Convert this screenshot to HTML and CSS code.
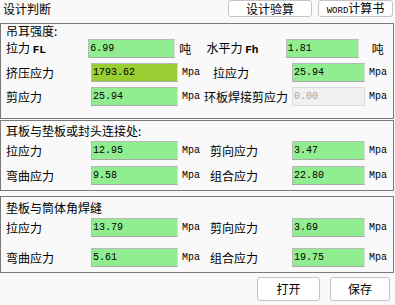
FILE: index.html
```html
<!DOCTYPE html>
<html lang="zh-CN">
  <head>
    <meta charset="UTF-8" />
    <meta name="viewport" content="width=device-width, initial-scale=1.0" />
    <title>设计判断</title>
    <link rel="stylesheet" href="styles.css">
  </head>
  <body>
    <header class="topbar">
      <span class="page-title">设计判断</span>
      <div class="top-actions">
        <button class="btn btn-check">设计验算</button>
        <button class="btn btn-word"><span class="latin">WORD</span>计算书</button>
      </div>
    </header>

    <section class="group group-lug">
      <h2 class="group-title">吊耳强度:</h2>
      <div class="row">
        <label class="lbl">拉力 <span class="latin">FL</span></label>
        <input class="field" value="6.99" readonly />
        <span class="unit">吨</span>
        <label class="lbl2">水平力 <span class="latin">Fh</span></label>
        <input class="field field-sm" value="1.81" readonly />
        <span class="unit unit-ton">吨</span>
      </div>
      <div class="row">
        <label class="lbl">挤压应力</label>
        <input class="field field-warn" value="1793.62" readonly />
        <span class="unit latin">Mpa</span>
        <label class="lbl2 lbl2-in">拉应力</label>
        <input class="field field-sm" value="25.94" readonly />
        <span class="unit latin">Mpa</span>
      </div>
      <div class="row">
        <label class="lbl">剪应力</label>
        <input class="field" value="25.94" readonly />
        <span class="unit latin">Mpa</span>
        <label class="lbl2 lbl2-long">环板焊接剪应力</label>
        <input class="field field-sm" value="0.00" disabled />
        <span class="unit latin">Mpa</span>
      </div>
    </section>

    <section class="group group-plate">
      <h2 class="group-title">耳板与垫板或封头连接处:</h2>
      <div class="row">
        <label class="lbl">拉应力</label>
        <input class="field" value="12.95" readonly />
        <span class="unit latin">Mpa</span>
        <label class="lbl2">剪向应力</label>
        <input class="field field-sm" value="3.47" readonly />
        <span class="unit latin">Mpa</span>
      </div>
      <div class="row">
        <label class="lbl">弯曲应力</label>
        <input class="field" value="9.58" readonly />
        <span class="unit latin">Mpa</span>
        <label class="lbl2">组合应力</label>
        <input class="field field-sm" value="22.80" readonly />
        <span class="unit latin">Mpa</span>
      </div>
    </section>

    <section class="group group-weld">
      <h2 class="group-title">垫板与筒体角焊缝</h2>
      <div class="row">
        <label class="lbl">拉应力</label>
        <input class="field" value="13.79" readonly />
        <span class="unit latin">Mpa</span>
        <label class="lbl2">剪向应力</label>
        <input class="field field-sm" value="3.69" readonly />
        <span class="unit latin">Mpa</span>
      </div>
      <div class="row">
        <label class="lbl">弯曲应力</label>
        <input class="field" value="5.61" readonly />
        <span class="unit latin">Mpa</span>
        <label class="lbl2">组合应力</label>
        <input class="field field-sm" value="19.75" readonly />
        <span class="unit latin">Mpa</span>
      </div>
    </section>

    <footer class="actions">
      <button class="btn btn-open">打开</button>
      <button class="btn btn-save">保存</button>
    </footer>
  </body>
</html>
```

FILE: styles.css
```css
body {
  font-family: "Noto Sans CJK SC", "Noto Sans", sans-serif;
  font-size: 12px;
  line-height: 14px;
  color: #000;
  margin: 0;
  padding: 0;
  background-color: #f9f9f9;
}
.latin {
  font-family: "Liberation Mono", monospace;
  font-size: 10px;
}
.lbl .latin,
.lbl2 .latin {
  font-size: 11px;
  font-weight: bold;
}
.topbar {
  display: flex;
  justify-content: space-between;
  height: 23px;
}
.page-title {
  padding: 2px 0 0 3px;
  line-height: 14px;
}
.top-actions {
  display: flex;
  gap: 6px;
  padding-right: 2px;
}
.btn {
  font-family: inherit;
  font-size: 12px;
  line-height: 14px;
  background-color: #fff;
  border: 1px solid #c4c4c4;
  border-radius: 3px;
  padding: 0;
  color: #000;
}
.btn-check {
  width: 84px;
  height: 17px;
}
.btn-word {
  width: 75px;
  height: 17px;
}
.btn-word .latin {
  font-size: 9px;
}

.group {
  border: 1px solid #7a7a7a;
  margin-right: 1px;
}
.group-title {
  font-size: 12px;
  font-weight: normal;
  line-height: 13px;
  margin: 0;
  padding-left: 5px;
}
.row {
  display: flex;
  align-items: center;
  height: 19px;
  padding-left: 5px;
}
.lbl {
  width: 85px;
  white-space: nowrap;
}
.lbl2 {
  width: 82px;
  padding-left: 6px;
  white-space: nowrap;
}
.lbl2-in {
  padding-left: 9px;
  width: 79px;
}
.lbl2-long {
  padding-left: 0;
  width: 88px;
}
.field {
  width: 87px;
  height: 19px;
  box-sizing: border-box;
  margin: 0;
  padding: 0 1px;
  font-family: "Liberation Mono", monospace;
  font-size: 10px;
  color: #000;
  background-color: #90ee90;
  border: 1px solid;
  border-color: #b9b9b9 #dcdcdc #a9a9a9 #b9b9b9;
  outline: none;
}
.field-sm {
  width: 73px;
}
.field-warn {
  background-color: #9acd32;
}
.field:disabled {
  background-color: #f0f0f0;
  color: #a6a6a6;
  border-color: #dcdcdc;
}
.unit {
  width: 22px;
  padding-left: 4px;
}
.unit-ton {
  padding-left: 13px;
}

.group-lug {
  padding-bottom: 12px;
}
.group-lug .group-title {
  line-height: 14px;
  padding-bottom: 1px;
}
.group-lug .row + .row {
  margin-top: 5px;
}
.group-plate {
  margin-top: 1px;
  padding-bottom: 5px;
}
.group-plate .group-title {
  padding-top: 3px;
  padding-bottom: 4px;
}
.group-plate .row + .row {
  margin-top: 6px;
}
.group-weld {
  margin-top: 5px;
  padding-bottom: 5px;
}
.group-weld .group-title {
  padding-top: 4px;
  padding-bottom: 4px;
}
.group-weld .row + .row {
  margin-top: 11px;
}

.actions {
  display: flex;
  justify-content: flex-end;
  gap: 10px;
  margin-top: 4px;
  padding-right: 5px;
}
.btn-open {
  width: 63px;
  height: 24px;
}
.btn-save {
  width: 60px;
  height: 24px;
}
```
